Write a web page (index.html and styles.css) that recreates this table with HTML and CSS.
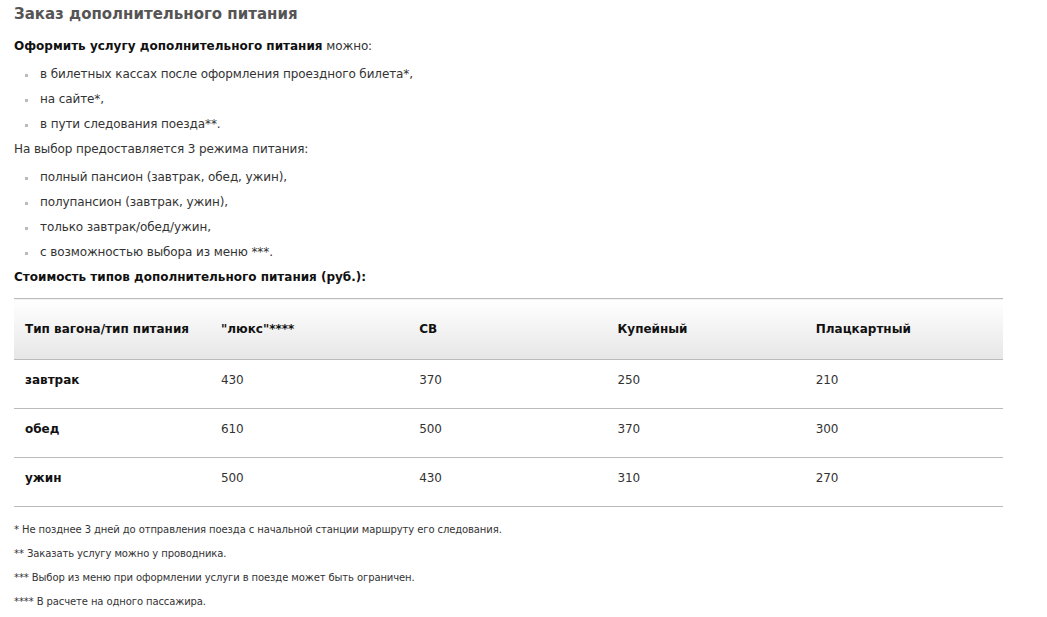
FILE: index.html
```html
<!DOCTYPE html>
<html lang="ru">
<head>
<meta charset="utf-8">
<title>Заказ дополнительного питания</title>
<link rel="stylesheet" href="styles.css">
</head>
<body>
<div class="page">
  <h1 class="title">Заказ дополнительного питания</h1>
  <p class="para"><b>Оформить услугу дополнительного питания</b> можно:</p>
  <ul class="list">
    <li>в билетных кассах после оформления проездного билета*,</li>
    <li>на сайте*,</li>
    <li>в пути следования поезда**.</li>
  </ul>
  <p class="para">На выбор предоставляется 3 режима питания:</p>
  <ul class="list">
    <li>полный пансион (завтрак, обед, ужин),</li>
    <li>полупансион (завтрак, ужин),</li>
    <li>только завтрак/обед/ужин,</li>
    <li>с возможностью выбора из меню ***.</li>
  </ul>
  <p class="para"><b>Стоимость типов дополнительного питания (руб.):</b></p>
  <table class="prices">
    <colgroup>
      <col class="c-first"><col><col><col><col>
    </colgroup>
    <thead>
      <tr>
        <th>Тип вагона/тип питания</th>
        <th>"люкс"****</th>
        <th>СВ</th>
        <th>Купейный</th>
        <th>Плацкартный</th>
      </tr>
    </thead>
    <tbody>
      <tr><td class="meal">завтрак</td><td>430</td><td>370</td><td>250</td><td>210</td></tr>
      <tr><td class="meal">обед</td><td>610</td><td>500</td><td>370</td><td>300</td></tr>
      <tr><td class="meal">ужин</td><td>500</td><td>430</td><td>310</td><td>270</td></tr>
    </tbody>
  </table>
  <div class="notes">
    <p>* Не позднее 3 дней до отправления поезда с начальной станции маршруту его следования.</p>
    <p>** Заказать услугу можно у проводника.</p>
    <p>*** Выбор из меню при оформлении услуги в поезде может быть ограничен.</p>
    <p>**** В расчете на одного пассажира.</p>
  </div>
</div>
</body>
</html>
```
FILE: styles.css
```css
html, body {
  margin: 0;
  padding: 0;
  background: #fff;
}
body {
  font-family: "DejaVu Sans", Verdana, sans-serif;
  font-size: 12px;
  color: #333;
}
.page {
  padding: 0 14px;
  width: 989px;
}
.title {
  margin: 0;
  font-size: 15px;
  line-height: 28px;
  font-weight: bold;
  color: #555;
}
.para {
  margin: 0;
  line-height: 25px;
  letter-spacing: -0.1px;
}
.title + .para {
  margin-top: 6px;
}
.para b {
  color: #111;
  letter-spacing: 0;
}
.list {
  list-style: none;
  margin: 3px 0 0;
  padding: 0;
}
.list li {
  position: relative;
  line-height: 25px;
  padding-left: 26px;
  letter-spacing: -0.1px;
}
.list li::before {
  content: "";
  position: absolute;
  left: 11px;
  top: 12px;
  width: 3px;
  height: 3px;
  background: #bbb;
}
.prices {
  margin-top: 8px;
  width: 989px;
  border-collapse: collapse;
  table-layout: fixed;
}
.prices col.c-first {
  width: 196px;
}
.prices th {
  height: 60px;
  padding: 0 11px;
  text-align: left;
  font-weight: bold;
  color: #111;
  background: linear-gradient(#fff, #e6e6e6);
  border-top: 1px solid #bbb;
  border-bottom: 1px solid #bbb;
}
.prices td {
  height: 39px;
  padding: 0 11px 9px;
  border-bottom: 1px solid #bbb;
  color: #333;
  letter-spacing: -0.1px;
}
.prices td.meal {
  font-weight: bold;
  color: #111;
  letter-spacing: 0;
}
.notes {
  margin-top: 11px;
  font-size: 10px;
  color: #333;
  letter-spacing: -0.1px;
}
.notes p {
  margin: 0;
  line-height: 24px;
}
```
